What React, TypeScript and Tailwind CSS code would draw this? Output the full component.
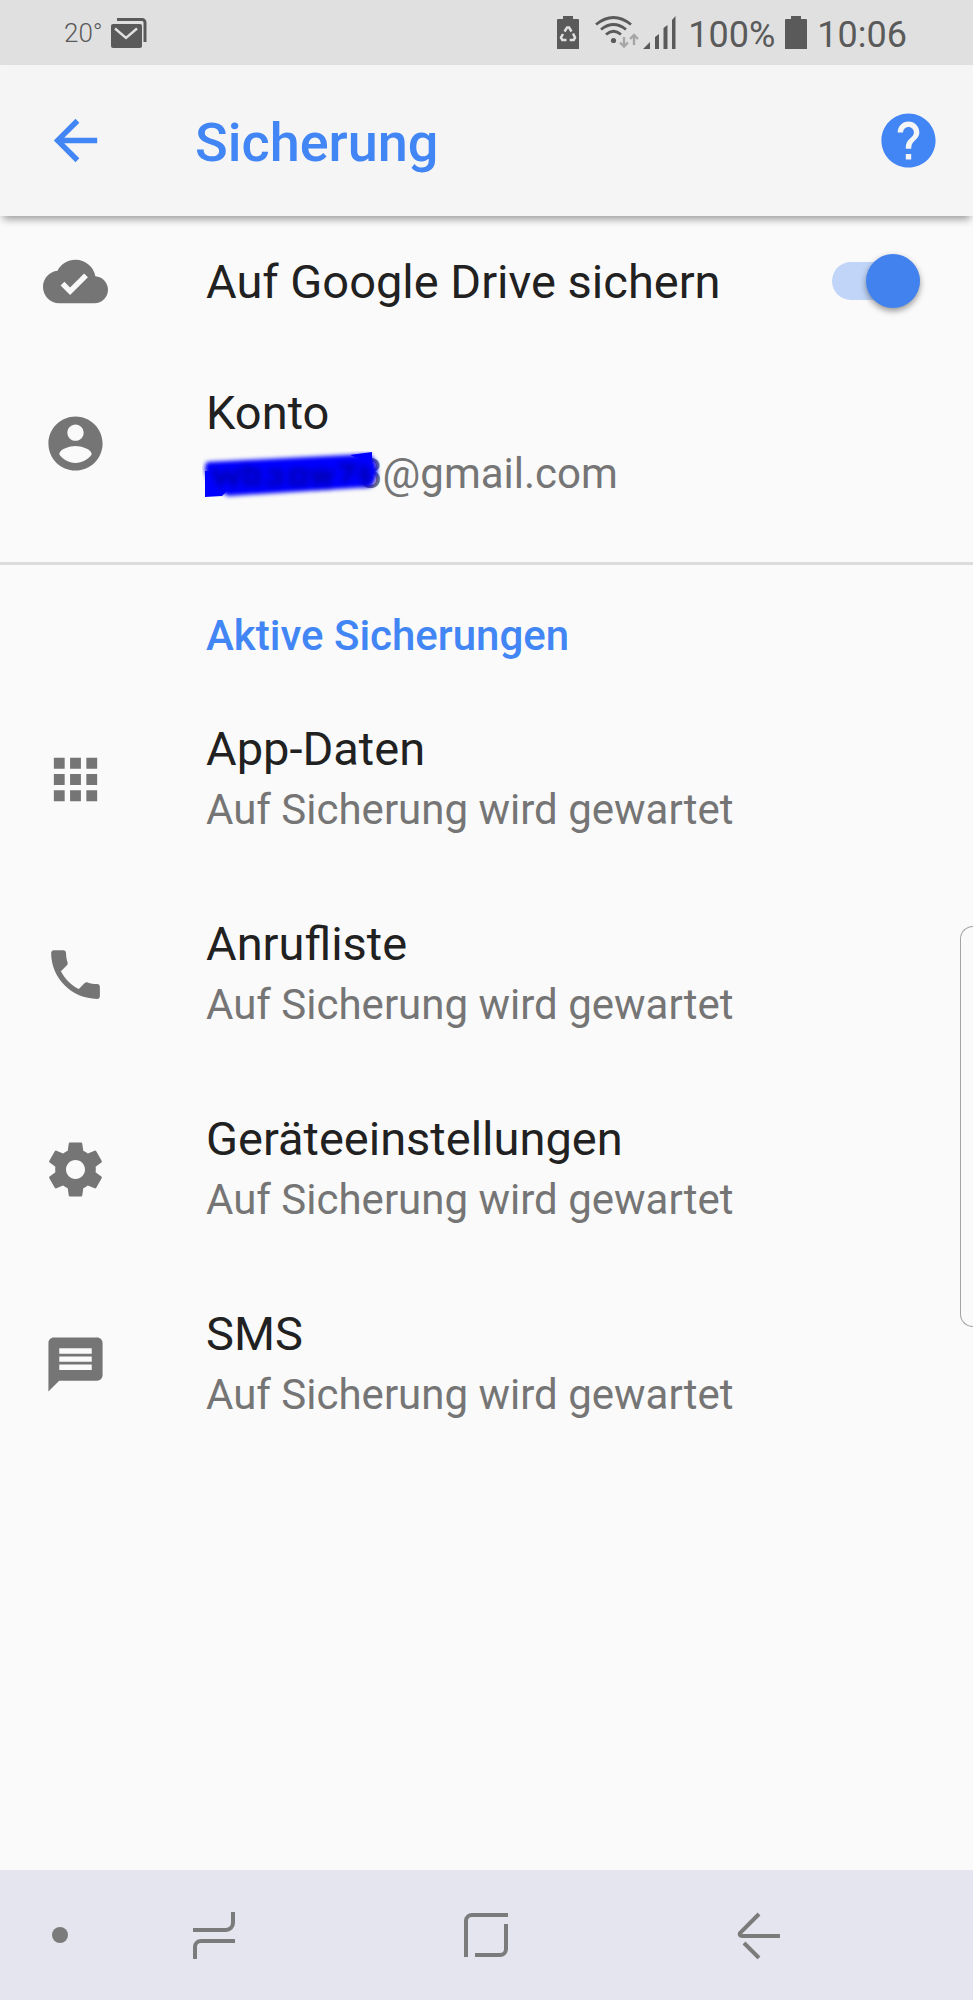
import { useState } from 'react'

const paths = {
  back: 'M20 11H7.83l5.59-5.59L12 4l-8 8 8 8 1.41-1.41L7.83 13H20v-2z',
  help: 'M12 2C6.48 2 2 6.48 2 12s4.48 10 10 10 10-4.48 10-10S17.52 2 12 2zm1 17h-2v-2h2v2zm2.07-7.75l-.9.92C13.45 12.9 13 13.5 13 15h-2v-.5c0-1.1.45-2.1 1.17-2.83l1.24-1.26c.37-.36.59-.86.59-1.41 0-1.1-.9-2-2-2s-2 .9-2 2H8c0-2.21 1.79-4 4-4s4 1.79 4 4c0 .88-.36 1.68-.93 2.25z',
  cloud: 'M19.35 10.04C18.67 6.59 15.64 4 12 4 9.11 4 6.6 5.64 5.35 8.04 2.34 8.36 0 10.91 0 14c0 3.31 2.69 6 6 6h13c2.76 0 5-2.24 5-5 0-2.64-2.05-4.78-4.65-4.96zM10 17l-3.5-3.5 1.41-1.41L10 14.17 15.18 9l1.41 1.41L10 17z',
  account: 'M12 2C6.48 2 2 6.48 2 12s4.48 10 10 10 10-4.48 10-10S17.52 2 12 2zm0 3c1.66 0 3 1.34 3 3s-1.34 3-3 3-3-1.34-3-3 1.34-3 3-3zm0 14.2c-2.5 0-4.71-1.28-6-3.22.03-1.99 4-3.08 6-3.08 1.99 0 5.97 1.09 6 3.08-1.29 1.94-3.5 3.22-6 3.22z',
  apps: 'M4 8h4V4H4v4zm6 12h4v-4h-4v4zm-6 0h4v-4H4v4zm0-6h4v-4H4v4zm6 0h4v-4h-4v4zm6-10v4h4V4h-4zm-6 4h4V4h-4v4zm6 6h4v-4h-4v4zm0 6h4v-4h-4v4z',
  phone: 'M6.62 10.79c1.44 2.83 3.76 5.14 6.59 6.59l2.2-2.2c.27-.27.67-.36 1.02-.24 1.12.37 2.33.57 3.57.57.55 0 1 .45 1 1V20c0 .55-.45 1-1 1-9.39 0-17-7.61-17-17 0-.55.45-1 1-1h3.5c.55 0 1 .45 1 1 0 1.25.2 2.45.57 3.57.11.35.03.74-.25 1.02l-2.2 2.2z',
  settings: 'M19.43 12.98c.04-.32.07-.64.07-.98s-.03-.66-.07-.98l2.11-1.65c.19-.15.24-.42.12-.64l-2-3.46c-.12-.22-.39-.3-.61-.22l-2.49 1c-.52-.4-1.08-.73-1.69-.98l-.38-2.65C14.46 2.18 14.25 2 14 2h-4c-.25 0-.46.18-.49.42l-.38 2.65c-.61.25-1.17.59-1.69.98l-2.49-1c-.23-.09-.49 0-.61.22l-2 3.46c-.13.22-.07.49.12.64l2.11 1.65c-.04.32-.07.65-.07.98s.03.66.07.98l-2.11 1.65c-.19.15-.24.42-.12.64l2 3.46c.12.22.39.3.61.22l2.49-1c.52.4 1.08.73 1.69.98l.38 2.65c.03.24.24.42.49.42h4c.25 0 .46-.18.49-.42l.38-2.65c.61-.25 1.17-.59 1.69-.98l2.49 1c.23.09.49 0 .61-.22l2-3.46c.12-.22.07-.49-.12-.64l-2.11-1.65zM12 15.5c-1.93 0-3.5-1.57-3.5-3.5s1.57-3.5 3.5-3.5 3.5 1.57 3.5 3.5-1.57 3.5-3.5 3.5z',
  message: 'M20 2H4c-1.1 0-1.99.9-1.99 2L2 22l4-4h14c1.1 0 2-.9 2-2V4c0-1.1-.9-2-2-2zm-2 12H6v-2h12v2zm0-3H6V9h12v2zm0-3H6V6h12v2z',
}

type IconName = keyof typeof paths

const backups: { icon: IconName; title: string; status: string }[] = [
  { icon: 'apps', title: 'App-Daten', status: 'Auf Sicherung wird gewartet' },
  { icon: 'phone', title: 'Anrufliste', status: 'Auf Sicherung wird gewartet' },
  { icon: 'settings', title: 'Geräteeinstellungen', status: 'Auf Sicherung wird gewartet' },
  { icon: 'message', title: 'SMS', status: 'Auf Sicherung wird gewartet' },
]

function Icon({ name }: { name: IconName }) {
  return (
    <svg viewBox="0 0 24 24" className="size-[65px] shrink-0 fill-current" aria-hidden="true">
      <path d={paths[name]} />
    </svg>
  )
}

function StatusBar() {
  return (
    <div className="flex h-[65px] items-center justify-between bg-[#e0e0e0] pl-16 pr-[66px] text-[#5a5a5a]">
      <div className="flex items-center gap-2">
        <span className="text-[26px] font-light leading-8">20°</span>
        <svg viewBox="0 0 36 30" className="h-[30px] w-9" aria-hidden="true">
          <path d="M6 1.5h25a3 3 0 0 1 3 3V24" fill="none" stroke="currentColor" strokeWidth="3" />
          <rect y="6" width="31" height="24" rx="2" fill="currentColor" />
          <path d="M4 10.500l11 9.500 11-9.500" fill="none" stroke="#e0e0e0" strokeWidth="2.400" />
        </svg>
      </div>
      <div className="flex items-center">
        <svg viewBox="0 0 22 33" className="mr-4 h-[33px] w-[22px]" aria-hidden="true">
          <path d="M6 0h10v3h5a1 1 0 0 1 1 1v29H0V4a1 1 0 0 1 1-1h5z" fill="currentColor" />
          <g fill="none" stroke="#e0e0e0" strokeWidth="2.500">
            <path d="M7.500 15.500l2.600-4h2l2.400 4" />
            <path d="M16 17.500l2 4-1.300 2.500h-4" />
            <path d="M9.500 24H5.300L4 21.500l2-3.500" />
          </g>
        </svg>
        <svg viewBox="0 0 44 33" className="mr-1 h-[33px] w-11" aria-hidden="true">
          <g fill="none" stroke="currentColor" strokeWidth="2.800">
            <path d="M1 8.500Q18.500-5.500 36 8.500" />
            <path d="M6 13.500Q18.500 3.500 31 13.500" />
            <path d="M11 18.500Q18.500 12 26 18.500" />
          </g>
          <circle cx="18.500" cy="24.500" r="2.600" fill="currentColor" />
          <g fill="none" stroke="#a6a6a6" strokeWidth="2.400">
            <path d="M29 21v10M25 26.500l4 4 4-4" />
            <path d="M39 29V19M35 23l4-4 4 4" />
          </g>
        </svg>
        <svg viewBox="0 0 33 33" className="mr-3 h-[33px] w-[33px] fill-current" aria-hidden="true">
          <path d="M0 33l7-7v7zM12 21l4-3v15h-4zM20.500 12l4-3v24h-4zM29 4l3.500-4v33H29z" />
        </svg>
        <span className="mr-[10px] pt-1 text-[36px] leading-[48px]">100%</span>
        <svg viewBox="0 0 22 33" className="mr-[10px] h-[33px] w-[22px] fill-current" aria-hidden="true">
          <path d="M6 0h10v3h5a1 1 0 0 1 1 1v29H0V4a1 1 0 0 1 1-1h5z" />
        </svg>
        <span className="pt-1 text-[36px] leading-[48px]">10:06</span>
      </div>
    </div>
  )
}

function RowText({ title, children }: { title: string; children: React.ReactNode }) {
  return (
    <div>
      <div className="text-[47px] leading-[60px] text-[#212121]">{title}</div>
      <div className="text-[42px] leading-[62px] text-[#757575]">{children}</div>
    </div>
  )
}

// local part of the address is painted over with a blue marker
function MaskedEmail() {
  return (
    <span className="relative flex">
      <span className="w-[153px]" />
      <span>3@gmail.com</span>
      <svg viewBox="0 0 184 50" className="absolute -left-1 top-2 h-[50px] w-[184px]" aria-hidden="true">
        <defs>
          <filter id="soft" x="-10%" y="-20%" width="120%" height="140%">
            <feGaussianBlur stdDeviation="2" />
          </filter>
          <filter id="smudge" x="-10%" y="-50%" width="120%" height="200%">
            <feGaussianBlur stdDeviation="3" />
          </filter>
        </defs>
        <path d="M3 20v26l17-1 8-8-10-17zM148 4l22-3v12z" fill="#00f" />
        <path d="M5 11L166 3q9 5 9 16t-6 17L26 45 10 36Q-1 18 5 11z" fill="#00f" filter="url(#soft)" />
        <g fill="none" stroke="#00009c" strokeWidth="5" opacity="0.7" filter="url(#smudge)">
          <path d="M12 17l6 16 7-12 7 12 5-16" />
          <path d="M44 14v18h12V20H44M66 21h12v11H64M90 20h13v12H90zM110 18l5 14 5-12 5 12 5-14M137 15h14l-9 16M158 16q12 3 2 8 12 3 0 9" />
        </g>
      </svg>
    </span>
  )
}

function NavBar() {
  return (
    <nav className="flex h-[130px] bg-[#e5e5ef] pr-[78px] text-[#7b7b7b]">
      <button aria-label="Leiste ausblenden" className="flex w-[78px] items-center justify-end pr-[10px]">
        <span className="size-4 rounded-full bg-current" />
      </button>
      <div className="grid flex-1 grid-cols-3">
        <button aria-label="Letzte Apps" className="flex items-center justify-center">
          <svg viewBox="0 0 48 48" className="size-12" fill="none" stroke="currentColor" strokeWidth="4">
            <path d="M3 19h33a7 7 0 0 0 7-7V1M5 48V36a6 6 0 0 1 6-6h34" />
          </svg>
        </button>
        <button aria-label="Startbildschirm" className="flex items-center justify-center">
          <svg viewBox="0 0 48 48" className="size-12" fill="none" stroke="currentColor" strokeWidth="4">
            <path d="M4 46V10a6 6 0 0 1 6-6h36M44 13v25a6 6 0 0 1-6 6H13" />
          </svg>
        </button>
        <button aria-label="Zurück" className="flex items-center justify-center">
          <svg viewBox="0 0 48 48" className="size-12" fill="none" stroke="currentColor" strokeWidth="4">
            <path d="M24 3L5 22q-1 3 2 3h38M9 32l15 15" />
          </svg>
        </button>
      </div>
    </nav>
  )
}

export default function App() {
  const [enabled, setEnabled] = useState(true)

  return (
    <div className="relative flex min-h-screen flex-col overflow-hidden bg-[#fafafa] font-[Roboto,sans-serif]">
      <StatusBar />

      <header className="relative flex h-[151px] items-center bg-[#f5f5f5] pl-[43px] pr-8 text-[#4285f4] shadow-[0_6px_8px_-3px_rgba(0,0,0,0.4)]">
        <button aria-label="Zurück">
          <Icon name="back" />
        </button>
        <h1 className="ml-[87px] flex-1 pt-1 text-[54px] font-medium leading-[64px]">Sicherung</h1>
        <button aria-label="Hilfe">
          <Icon name="help" />
        </button>
      </header>

      <main className="flex-1 text-[#757575]">
        <div className="flex h-[130px] items-center gap-[98px] pl-[43px] pr-[53px]">
          <Icon name="cloud" />
          <label htmlFor="drive" className="flex-1 pt-[2px] text-[47px] leading-[60px] text-[#212121]">
            Auf Google Drive sichern
          </label>
          <input
            id="drive"
            type="checkbox"
            role="switch"
            checked={enabled}
            onChange={(e) => setEnabled(e.target.checked)}
            className="relative h-[54px] w-[88px] shrink-0 appearance-none before:absolute before:inset-x-0 before:top-2 before:h-[38px] before:rounded-full before:bg-[#bdbdbd] after:absolute after:left-0 after:top-0 after:size-[54px] after:rounded-full after:bg-white after:shadow-[0_3px_6px_rgba(0,0,0,0.4)] checked:before:bg-[#c1d5f8] checked:after:left-[34px] checked:after:bg-[#4282ee]"
          />
        </div>

        <div className="flex h-[195px] items-center gap-[98px] pl-[43px]">
          <Icon name="account" />
          <RowText title="Konto">
            <MaskedEmail />
          </RowText>
        </div>

        <section className="mt-[21px] border-t-[3px] border-[#dcdcdc]">
          <h2 className="pb-4 pl-[206px] pt-[41px] text-[42px] font-medium leading-[60px] text-[#4285f4]">
            Aktive Sicherungen
          </h2>
          <ul>
            {backups.map((item) => (
              <li key={item.title} className="flex h-[195px] items-center gap-[98px] pl-[43px]">
                <Icon name={item.icon} />
                <RowText title={item.title}>{item.status}</RowText>
              </li>
            ))}
          </ul>
        </section>
      </main>

      <NavBar />

      {/* edge panel handle */}
      <div className="absolute right-0 top-[926px] h-[401px] w-[13px] rounded-l-[13px] border border-r-0 border-[#a3a3a3]" />
    </div>
  )
}
